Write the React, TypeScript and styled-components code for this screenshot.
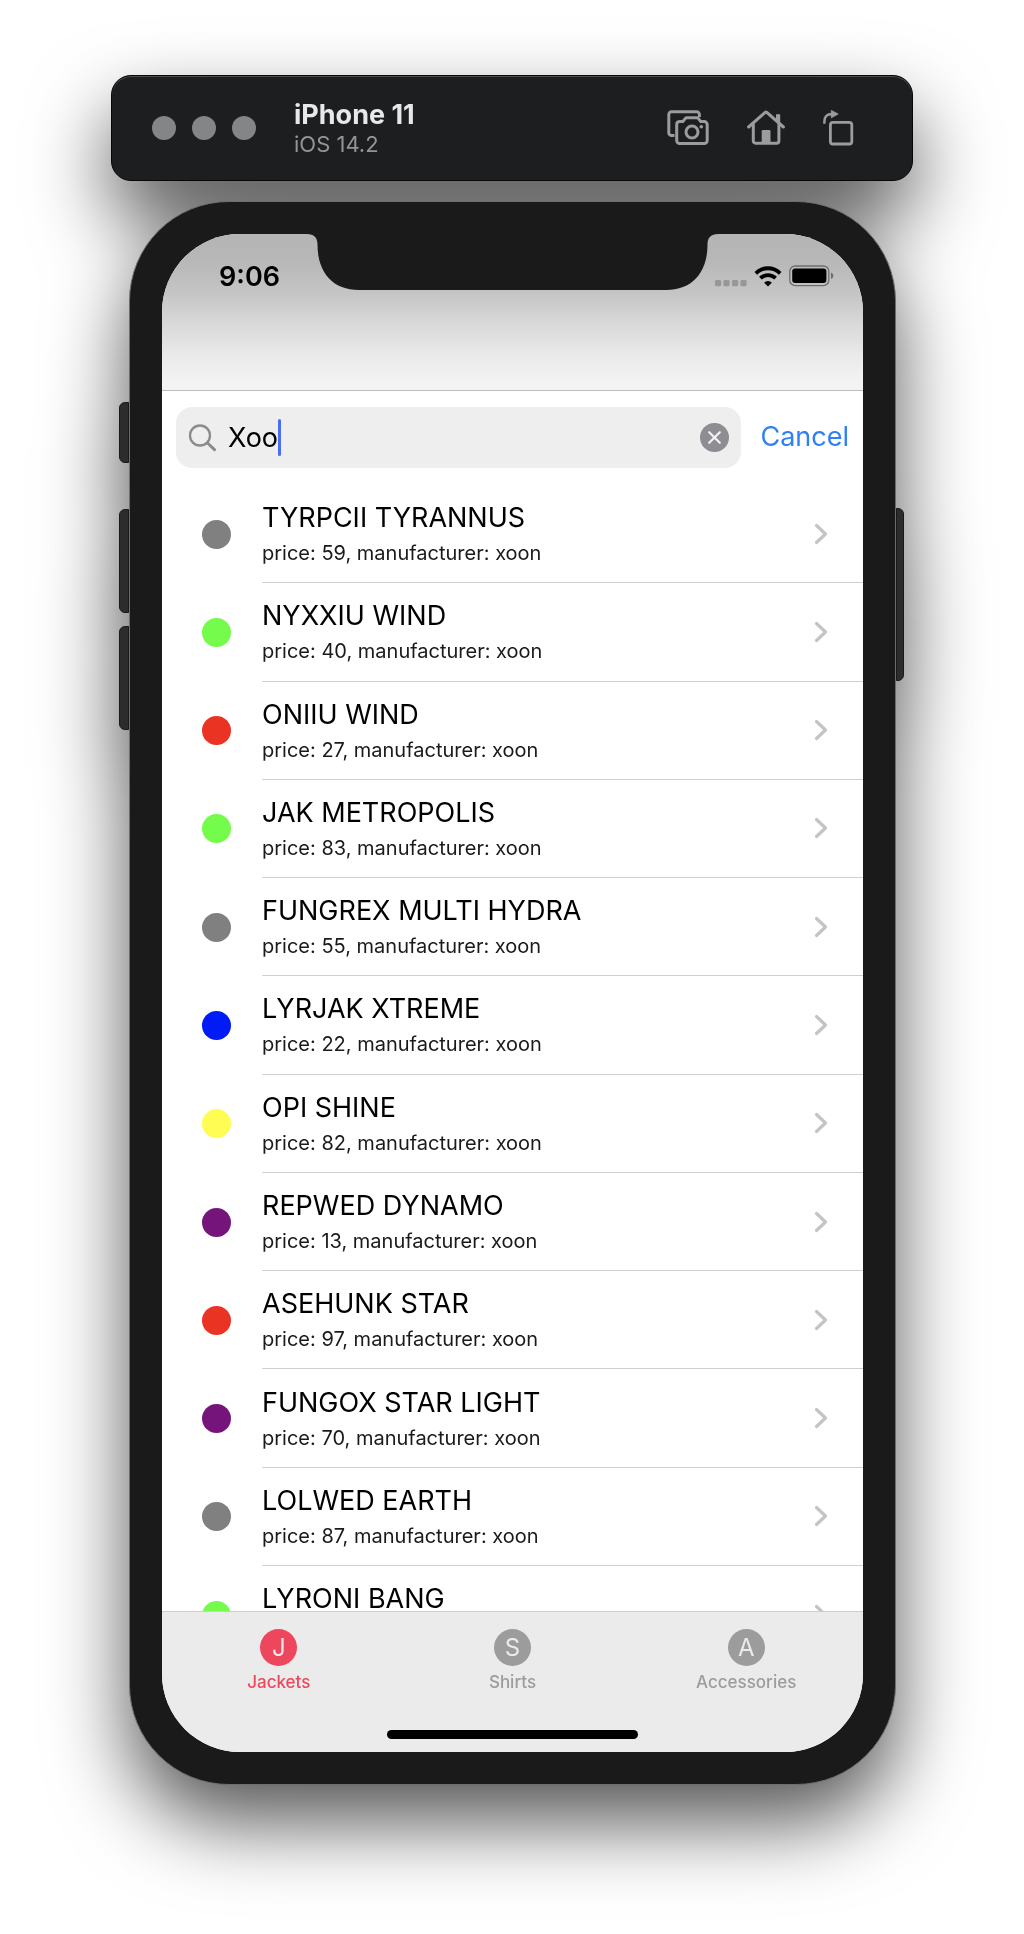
import React, { useState } from "react";
import styled, { createGlobalStyle } from "styled-components";

const Global = createGlobalStyle`
  *, *::before, *::after { box-sizing: border-box; }
  body {
    margin: 0;
    background: #fff;
    font-family: Inter, "Liberation Sans", sans-serif;
    color: #000;
  }
  button { font: inherit; color: inherit; border: 0; padding: 0; background: none; cursor: pointer; }
`;

const Stage = styled.main`
  display: flex;
  flex-direction: column;
  gap: 20px;
  width: 100%;
  max-width: 1024px;
  margin: 0 auto;
  padding: 75px 111px 149px;
  filter: drop-shadow(0 38px 40px rgba(0, 0, 0, 0.66));
`;

/* ---- simulator toolbar ---- */

const Toolbar = styled.header`
  display: flex;
  align-items: center;
  height: 106px;
  padding: 0 58px 0 40px;
  border: 1px solid #060606;
  border-radius: 20px;
  background: #1d1e20;
  box-shadow: inset 0 1px 0 #4c4d4e;
`;

const WindowDots = styled.div`
  display: flex;
  gap: 16px;
  margin-right: 38px;
`;

const WindowDot = styled.button`
  width: 24px;
  height: 24px;
  border-radius: 50%;
  background: #848587;
`;

const DeviceInfo = styled.div`
  flex: 1;
  padding-top: 2px;
`;

const DeviceName = styled.h1`
  margin: 0;
  font-size: 27px;
  font-weight: 700;
  line-height: 30px;
  color: #e8e8e8;
`;

const DeviceSystem = styled.p`
  margin: 0;
  font-size: 22px;
  line-height: 28px;
  color: #949496;
`;

const ToolbarActions = styled.div`
  display: flex;
  gap: 38px;
`;

const ToolbarButton = styled.button`
  display: flex;
  color: #9b9c9e;
`;

/* ---- phone ---- */

const Device = styled.div`
  display: flex;
  padding: 0 9px 0 8px;
`;

const Rail = styled.div<{ $side: "left" | "right" }>`
  display: flex;
  flex-direction: column;
  flex: none;
  width: ${(p) => (p.$side === "left" ? 10 : 8)}px;
`;

const SideKey = styled.span<{ $size: number; $gap: number; $side: "left" | "right" }>`
  height: ${(p) => p.$size}px;
  margin-top: ${(p) => p.$gap}px;
  border: 1px solid #191919;
  border-radius: ${(p) => (p.$side === "left" ? "6px 0 0 6px" : "0 6px 6px 0")};
  background: #2c2c2c;
`;

const Body = styled.div`
  flex: 1;
  min-width: 0;
  padding: 32px;
  border: 1px solid #6e6e6e;
  border-radius: 100px;
  background: #1a1a1a;
`;

const Screen = styled.div`
  display: flex;
  flex-direction: column;
  aspect-ratio: 701 / 1518;
  overflow: hidden;
  border-radius: 78px;
  background: #fff;
`;

const TopBar = styled.div`
  flex: none;
  height: 157px;
  border-bottom: 1px solid #bdbdbd;
  background: linear-gradient(#b4b4b4 0%, #b8b8b8 18%, #c5c5c5 38%, #d9d9d9 58%, #eaeaea 78%, #f2f2f2 94%, #f3f3f3 100%);
`;

const StatusBar = styled.div`
  display: grid;
  grid-template-columns: minmax(0, 1fr) auto minmax(0, 1fr);
`;

const Time = styled.time`
  padding: 29px 0 0 57px;
  font-size: 27px;
  font-weight: 600;
  line-height: 28px;
`;

const StatusIcons = styled.div`
  display: flex;
  justify-content: flex-end;
  align-items: flex-end;
  gap: 7px;
  padding: 0 29px 4px 0;

  svg { flex: none; }
`;

/* ---- search ---- */

const SearchBar = styled.form`
  display: flex;
  flex: none;
  align-items: center;
  gap: 19px;
  padding: 16px 14px 17px;
`;

const SearchField = styled.label`
  display: flex;
  flex: 1;
  align-items: center;
  height: 61px;
  min-width: 0;
  padding: 0 12px;
  border-radius: 16px;
  background: #eeeeee;
`;

const SearchInput = styled.input`
  field-sizing: content;
  min-width: 0;
  margin-left: 11px;
  padding: 0;
  border: 0;
  outline: 0;
  background: none;
  font: inherit;
  font-size: 27px;
  line-height: 36px;
  caret-color: transparent;
`;

const Caret = styled.span`
  flex: none;
  width: 3px;
  height: 37px;
  border-radius: 2px;
  background: #4a6ef0;
`;

const ClearButton = styled.button`
  display: flex;
  margin-left: auto;
`;

const CancelButton = styled.button`
  padding-bottom: 2px;
  font-size: 27px;
  line-height: 36px;
  color: #2f80f7;
`;

/* ---- list ---- */

const List = styled.ul`
  display: grid;
  flex: 1;
  grid-template-rows: repeat(11, minmax(0, 1fr)) 45px;
  min-height: 0;
  margin: 0;
  padding: 0;
  overflow: hidden;
  list-style: none;
`;

const Row = styled.li`
  min-height: 0;
`;

const RowLink = styled.a`
  display: flex;
  height: 100%;
  min-height: 98px;
  align-items: stretch;
  padding-left: 40px;
  color: inherit;
  text-decoration: none;
`;

const Swatch = styled.span<{ $color: string }>`
  align-self: center;
  flex: none;
  width: 29px;
  height: 29px;
  margin-right: 31px;
  border-radius: 50%;
  background: ${(p) => p.$color};
`;

const RowMain = styled.div`
  display: flex;
  flex: 1;
  align-items: center;
  min-width: 0;
  padding-right: 35px;
  border-bottom: 1px solid #d0d0d2;
`;

const RowText = styled.div`
  flex: 1;
  min-width: 0;
  white-space: nowrap;
`;

const Title = styled.div`
  font-size: 27px;
  line-height: 32px;
`;

const Detail = styled.div`
  min-height: 31px;
  padding-top: 7px;
  font-size: 20px;
  line-height: 24px;
  color: #1a1a1a;
`;

/* ---- tab bar ---- */

const TabBar = styled.nav`
  display: flex;
  flex: none;
  flex-direction: column;
  align-items: center;
  justify-content: space-between;
  height: 141px;
  padding: 17px 0 13px;
  border-top: 1px solid #cecece;
  background: #ebebeb;
`;

const Tabs = styled.div`
  display: grid;
  grid-template-columns: repeat(3, 1fr);
  width: 100%;
`;

const Tab = styled.button<{ $active: boolean }>`
  display: flex;
  flex-direction: column;
  align-items: center;
  gap: 6px;
  font-size: 17px;
  font-weight: 500;
  line-height: 20px;
  color: ${(p) => (p.$active ? "#ee465d" : "#9c9c9c")};
`;

const TabBadge = styled.span`
  display: flex;
  align-items: center;
  justify-content: center;
  width: 37px;
  height: 37px;
  border-radius: 50%;
  background: currentColor;
`;

const TabLetter = styled.span`
  font-size: 24px;
  font-weight: 400;
  color: #ebebeb;
`;

const HomeIndicator = styled.span`
  width: 251px;
  height: 9px;
  border-radius: 5px;
  background: #000;
`;

/* ---- drawings ---- */

const ScreenshotIcon = () => (
  <svg width="42" height="36" viewBox="0 0 42 36" fill="none" stroke="currentColor" strokeWidth="3" strokeLinejoin="round">
    <path d="M7.5 25.500H4.600a2.800 2.800 0 0 1-2.800-2.800V4.600a2.800 2.800 0 0 1 2.800-2.800h25a2.800 2.800 0 0 1 2.800 2.800V7" />
    <path d="M12.4 11.6h3.4l2.4-3q.7-.8 1.8-.8h9.6q1.100 0 1.800.8l2.400 3h3.400a3 3 0 0 1 3 3v16a3 3 0 0 1-3 3H12.700a3 3 0 0 1-3-3V14.600a3 3 0 0 1 2.700-3z" />
    <circle cx="25" cy="22" r="6" />
    <circle cx="34.300" cy="16.800" r="1.800" fill="currentColor" stroke="none" />
  </svg>
);

const HomeIcon = () => (
  <svg width="38" height="36" viewBox="0 0 38 36" fill="none" stroke="currentColor" strokeWidth="3" strokeLinecap="round" strokeLinejoin="round">
    <path d="M1.600 17 18.200 2.400a1.200 1.200 0 0 1 1.600 0L36.400 17" />
    <path d="M6.300 14.500V31a2.200 2.200 0 0 0 2.200 2.200h21.200a2.200 2.200 0 0 0 2.200-2.200V14.500" />
    <path d="M29 4.300h4.200V14L29 10.300z" fill="currentColor" stroke="none" />
    <path d="M14.700 21.200q0-1.200 1.200-1.200h6.400q1.200 0 1.200 1.200V33h-8.800z" fill="currentColor" stroke="none" />
  </svg>
);

const RotateIcon = () => (
  <svg width="31" height="36" viewBox="0 0 31 36" fill="none" stroke="currentColor" strokeWidth="2.800">
    <rect x="7.400" y="12.400" width="21.400" height="21.600" rx="2.600" />
    <path d="M1.400 13.800V11.500Q1.400 4 9 4" strokeWidth="2.400" />
    <path d="M8.300.4 15.200 4 8.300 7.800z" fill="currentColor" strokeWidth=".8" strokeLinejoin="round" />
  </svg>
);

const Notch = () => (
  <svg width="411" height="56" viewBox="0 0 411 56" fill="#1a1a1a">
    <path d="M0 0C7 0 10.500 3.500 10.500 10.500C10.500 40 27 56 52 56H359C384 56 400.500 40 400.500 10.500C400.500 3.500 404 0 411 0z" />
  </svg>
);

const SignalIcon = () => (
  <svg width="32" height="21" viewBox="0 0 32 21" fill="#979797">
    {[0, 8.400, 17, 25.400].map((x) => (
      <rect key={x} x={x} y="14" width="6.200" height="6.200" rx="1.400" />
    ))}
  </svg>
);

const WifiIcon = () => (
  <svg width="28" height="21" viewBox="0 0 28 21" fill="none" stroke="#000" strokeWidth="3.800">
    <path d="M1.800 7.300a17.300 17.300 0 0 1 24.400 0" />
    <path d="M6.400 12.200a10.800 10.800 0 0 1 15.200 0" />
    <path d="M14 20.600l-3.800-3.900a5.200 5.200 0 0 1 7.600 0z" fill="#000" stroke="none" />
  </svg>
);

const BatteryIcon = () => (
  <svg width="45" height="22" viewBox="0 0 45 22">
    <rect x=".8" y="1" width="39" height="19.600" rx="5.400" fill="none" stroke="#6d6d6d" strokeWidth="1.300" />
    <rect x="3.200" y="3.600" width="34.200" height="14.400" rx="3" />
    <path d="M42 7.600q2.400.9 2.400 3.200T42 14z" fill="#6d6d6d" />
  </svg>
);

const SearchIcon = () => (
  <svg width="29" height="28" viewBox="0 0 29 28" fill="none" stroke="#8b8b8f" strokeLinecap="round">
    <circle cx="12" cy="11.500" r="10" strokeWidth="2.300" />
    <path d="M19.500 19l7 6.600" strokeWidth="3" />
  </svg>
);

const ClearIcon = () => (
  <svg width="29" height="29" viewBox="0 0 29 29">
    <circle cx="14.500" cy="14.500" r="14.500" fill="#8d8d93" />
    <path d="M9.200 9.200l10.600 10.600M19.800 9.200L9.200 19.800" stroke="#f1f1f1" strokeWidth="2.300" strokeLinecap="round" />
  </svg>
);

const Chevron = () => (
  <svg width="14" height="22" viewBox="0 0 14 22" fill="none" stroke="#c4c4c6" strokeWidth="3.200" strokeLinecap="round" strokeLinejoin="round">
    <path d="M2.500 2.500l9 8.500-9 8.500" />
  </svg>
);

/* ---- data ---- */

const GREY = "#808080";
const GREEN = "#75fb4c";
const RED = "#ea3323";
const BLUE = "#001bf5";
const YELLOW = "#fffd54";
const PURPLE = "#75157b";

type Jacket = { name: string; color: string; price?: number };

const jackets: Jacket[] = [
  { name: "TYRPCII TYRANNUS", price: 59, color: GREY },
  { name: "NYXXIU WIND", price: 40, color: GREEN },
  { name: "ONIIU WIND", price: 27, color: RED },
  { name: "JAK METROPOLIS", price: 83, color: GREEN },
  { name: "FUNGREX MULTI HYDRA", price: 55, color: GREY },
  { name: "LYRJAK XTREME", price: 22, color: BLUE },
  { name: "OPI SHINE", price: 82, color: YELLOW },
  { name: "REPWED DYNAMO", price: 13, color: PURPLE },
  { name: "ASEHUNK STAR", price: 97, color: RED },
  { name: "FUNGOX STAR LIGHT", price: 70, color: PURPLE },
  { name: "LOLWED EARTH", price: 87, color: GREY },
  { name: "LYRONI BANG", color: GREEN },
];

const tabs = ["Jackets", "Shirts", "Accessories"];

export default function App() {
  const [query, setQuery] = useState("Xoo");
  const [active, setActive] = useState("Jackets");

  return (
    <>
      <Global />
      <Stage>
        <Toolbar>
          <WindowDots>
            <WindowDot aria-label="Close" />
            <WindowDot aria-label="Minimize" />
            <WindowDot aria-label="Zoom" />
          </WindowDots>
          <DeviceInfo>
            <DeviceName>iPhone 11</DeviceName>
            <DeviceSystem>iOS 14.2</DeviceSystem>
          </DeviceInfo>
          <ToolbarActions>
            <ToolbarButton aria-label="Screenshot"><ScreenshotIcon /></ToolbarButton>
            <ToolbarButton aria-label="Home"><HomeIcon /></ToolbarButton>
            <ToolbarButton aria-label="Rotate"><RotateIcon /></ToolbarButton>
          </ToolbarActions>
        </Toolbar>

        <Device>
          <Rail $side="left">
            <SideKey $side="left" $size={61} $gap={201} />
            <SideKey $side="left" $size={104} $gap={46} />
            <SideKey $side="left" $size={104} $gap={13} />
          </Rail>
          <Body>
            <Screen>
              <TopBar>
                <StatusBar>
                  <Time>9:06</Time>
                  <Notch />
                  <StatusIcons>
                    <SignalIcon />
                    <WifiIcon />
                    <BatteryIcon />
                  </StatusIcons>
                </StatusBar>
              </TopBar>

              <SearchBar onSubmit={(e) => e.preventDefault()}>
                <SearchField>
                  <SearchIcon />
                  <SearchInput
                    aria-label="Search"
                    value={query}
                    onChange={(e) => setQuery(e.target.value)}
                  />
                  <Caret />
                  <ClearButton type="button" aria-label="Clear" onClick={() => setQuery("")}>
                    <ClearIcon />
                  </ClearButton>
                </SearchField>
                <CancelButton type="button" onClick={() => setQuery("")}>Cancel</CancelButton>
              </SearchBar>

              <List>
                {jackets.map((item) => (
                  <Row key={item.name}>
                    <RowLink href="#">
                      <Swatch $color={item.color} />
                      <RowMain>
                        <RowText>
                          <Title>{item.name}</Title>
                          <Detail>
                            {item.price !== undefined && `price: ${item.price}, manufacturer: xoon`}
                          </Detail>
                        </RowText>
                        <Chevron />
                      </RowMain>
                    </RowLink>
                  </Row>
                ))}
              </List>

              <TabBar>
                <Tabs>
                  {tabs.map((name) => (
                    <Tab key={name} $active={name === active} onClick={() => setActive(name)}>
                      <TabBadge><TabLetter>{name[0]}</TabLetter></TabBadge>
                      {name}
                    </Tab>
                  ))}
                </Tabs>
                <HomeIndicator />
              </TabBar>
            </Screen>
          </Body>
          <Rail $side="right">
            <SideKey $side="right" $size={173} $gap={307} />
          </Rail>
        </Device>
      </Stage>
    </>
  );
}
